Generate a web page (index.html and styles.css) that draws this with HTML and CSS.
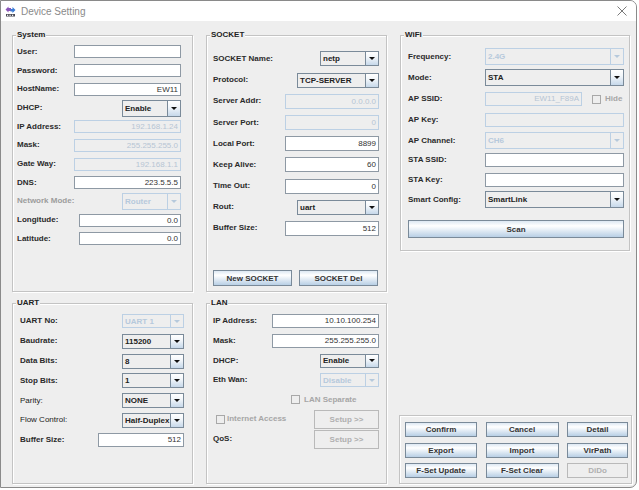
FILE: index.html
```html
<!DOCTYPE html>
<html>
<head>
<meta charset="utf-8">
<title>Device Setting</title>
<link rel="stylesheet" href="styles.css">
</head>
<body>
<div class="window">
  <div class="titlebar">
    <svg class="app-icon" width="11" height="11" viewBox="0 0 11 11">
      <path d="M0.5 3.5 L3.5 0.5 L3.5 2 L6 2 L6 5 L3.5 5 L3.5 6.5 Z" fill="#8a55b8"/>
      <path d="M10.5 4 L7.5 7 L7.5 5.5 L5.5 5.5 L5.5 3 L7.5 3 L7.5 1 Z" fill="#3a7bd5"/>
      <rect x="1" y="8" width="9" height="2.5" fill="#4a4a55"/>
      <rect x="2" y="8.7" width="1.2" height="1.2" fill="#fff"/>
      <rect x="4.5" y="8.7" width="1.2" height="1.2" fill="#fff"/>
      <rect x="7" y="8.7" width="1.2" height="1.2" fill="#fff"/>
    </svg>
    <span class="title">Device Setting</span>
    <svg class="close" width="10" height="10" viewBox="0 0 10 10">
      <path d="M0.5 0.5 L9.5 9.5 M9.5 0.5 L0.5 9.5" stroke="#7a7a7a" stroke-width="1" fill="none"/>
    </svg>
  </div>

  <div class="content">
    <!-- System -->
    <section class="group g-system">
      <span class="legend">System</span>
      <div class="rows sys-rows">
        <div class="row"><span class="lbl">User:</span><span class="tf w107 h13"></span></div>
        <div class="row"><span class="lbl">Password:</span><span class="tf w107 h13"></span></div>
        <div class="row"><span class="lbl">HostName:</span><span class="tf w107 h13">EW11</span></div>
        <div class="row"><span class="lbl">DHCP:</span><span class="cb w59 h17"><span class="cb-text">Enable</span><span class="cb-btn"></span></span></div>
        <div class="row"><span class="lbl">IP Address:</span><span class="tf dis w107 h13">192.168.1.24</span></div>
        <div class="row"><span class="lbl">Mask:</span><span class="tf dis w107 h13">255.255.255.0</span></div>
        <div class="row"><span class="lbl">Gate Way:</span><span class="tf dis w107 h13">192.168.1.1</span></div>
        <div class="row"><span class="lbl">DNS:</span><span class="tf w107 h13">223.5.5.5</span></div>
        <div class="row"><span class="lbl dis-lbl">Network Mode:</span><span class="cb dis w59 h17"><span class="cb-text">Router</span><span class="cb-btn"></span></span></div>
        <div class="row"><span class="lbl">Longitude:</span><span class="tf w102 h13">0.0</span></div>
        <div class="row"><span class="lbl">Latitude:</span><span class="tf w102 h13">0.0</span></div>
      </div>
    </section>

    <!-- SOCKET -->
    <section class="group g-socket">
      <span class="legend">SOCKET</span>
      <div class="rows sock-rows">
        <div class="row"><span class="lbl">SOCKET Name:</span><span class="cb w59 h15"><span class="cb-text">netp</span><span class="cb-btn"></span></span></div>
        <div class="row"><span class="lbl">Protocol:</span><span class="cb w82 h15"><span class="cb-text">TCP-SERVER</span><span class="cb-btn"></span></span></div>
        <div class="row"><span class="lbl">Server Addr:</span><span class="tf dis w94 h15">0.0.0.0</span></div>
        <div class="row"><span class="lbl">Server Port:</span><span class="tf dis w94 h15">0</span></div>
        <div class="row"><span class="lbl">Local Port:</span><span class="tf w94 h15">8899</span></div>
        <div class="row"><span class="lbl">Keep Alive:</span><span class="tf w94 h15">60</span></div>
        <div class="row"><span class="lbl">Time Out:</span><span class="tf w94 h15">0</span></div>
        <div class="row"><span class="lbl">Rout:</span><span class="cb w82 h15"><span class="cb-text">uart</span><span class="cb-btn"></span></span></div>
        <div class="row"><span class="lbl">Buffer Size:</span><span class="tf w94 h15">512</span></div>
      </div>
      <div class="sock-btns">
        <span class="btn">New SOCKET</span>
        <span class="btn">SOCKET Del</span>
      </div>
    </section>

    <!-- WiFi -->
    <section class="group g-wifi">
      <span class="legend">WiFi</span>
      <div class="wifi-grid">
        <span class="lbl">Frequency:</span><span class="cb dis h17"><span class="cb-text">2.4G</span><span class="cb-btn"></span></span>
        <span class="lbl">Mode:</span><span class="cb h17"><span class="cb-text">STA</span><span class="cb-btn"></span></span>
        <span class="lbl">AP SSID:</span>
        <span class="ssid-line"><span class="tf dis w97 h14">EW11_F89A</span><span class="chk"></span><span class="chk-lbl">Hide</span></span>
        <span class="lbl">AP Key:</span><span class="tf dis h14"></span>
        <span class="lbl">AP Channel:</span><span class="cb dis h17"><span class="cb-text">CH6</span><span class="cb-btn"></span></span>
        <span class="lbl">STA SSID:</span><span class="tf h14"></span>
        <span class="lbl">STA Key:</span><span class="tf h14"></span>
        <span class="lbl">Smart Config:</span><span class="cb h17"><span class="cb-text">SmartLink</span><span class="cb-btn"></span></span>
      </div>
      <span class="btn scan">Scan</span>
    </section>

    <!-- UART -->
    <section class="group g-uart">
      <span class="legend">UART</span>
      <div class="rows uart-rows">
        <div class="row"><span class="lbl">UART No:</span><span class="cb dis w62 h14"><span class="cb-text">UART 1</span><span class="cb-btn"></span></span></div>
        <div class="row"><span class="lbl">Baudrate:</span><span class="cb w62 h15"><span class="cb-text">115200</span><span class="cb-btn"></span></span></div>
        <div class="row"><span class="lbl">Data Bits:</span><span class="cb w62 h15"><span class="cb-text">8</span><span class="cb-btn"></span></span></div>
        <div class="row"><span class="lbl">Stop Bits:</span><span class="cb w62 h15"><span class="cb-text">1</span><span class="cb-btn"></span></span></div>
        <div class="row"><span class="lbl reg">Parity:</span><span class="cb w62 h15"><span class="cb-text">NONE</span><span class="cb-btn"></span></span></div>
        <div class="row"><span class="lbl reg">Flow Control:</span><span class="cb w62 h15"><span class="cb-text">Half-Duplex</span><span class="cb-btn"></span></span></div>
        <div class="row"><span class="lbl">Buffer Size:</span><span class="tf w86 h14">512</span></div>
      </div>
    </section>

    <!-- LAN -->
    <section class="group g-lan">
      <span class="legend">LAN</span>
      <div class="rows lan-rows">
        <div class="row"><span class="lbl">IP Address:</span><span class="tf w107 h14">10.10.100.254</span></div>
        <div class="row"><span class="lbl">Mask:</span><span class="tf w107 h14">255.255.255.0</span></div>
        <div class="row"><span class="lbl">DHCP:</span><span class="cb w59 h14"><span class="cb-text">Enable</span><span class="cb-btn"></span></span></div>
        <div class="row"><span class="lbl">Eth Wan:</span><span class="cb dis w59 h14"><span class="cb-text">Disable</span><span class="cb-btn"></span></span></div>
        <div class="row sep-row"><span class="chk"></span><span class="chk-lbl">LAN Separate</span></div>
        <div class="row"><span class="inet"><span class="chk"></span><span class="chk-lbl">Internet Access</span></span><span class="btn dis w65 h19">Setup &gt;&gt;</span></div>
        <div class="row"><span class="lbl">QoS:</span><span class="btn dis w65 h19">Setup &gt;&gt;</span></div>
      </div>
    </section>

    <!-- Buttons -->
    <section class="group g-actions">
      <div class="act-grid">
        <span class="btn">Confirm</span>
        <span class="btn">Cancel</span>
        <span class="btn">Detail</span>
        <span class="btn">Export</span>
        <span class="btn">Import</span>
        <span class="btn">VirPath</span>
        <span class="btn">F-Set Update</span>
        <span class="btn">F-Set Clear</span>
        <span class="btn dis">DiDo</span>
      </div>
    </section>
  </div>
</div>
</body>
</html>
```

FILE: styles.css
```css
* { box-sizing: border-box; }

body {
  margin: 0;
  background: #ffffff;
  font-family: "Liberation Sans", Arial, sans-serif;
}

.window {
  width: 637px;
  height: 488px;
  border: 1px solid #8a8a8a;
  border-radius: 0 7px 7px 0;
  overflow: hidden;
  background: #eeeeee;
  display: flex;
  flex-direction: column;
}

/* ---------- title bar ---------- */
.titlebar {
  flex: none;
  height: 20px;
  background: #ffffff;
  display: flex;
  align-items: center;
  padding-left: 4px;
}
.app-icon { flex: none; margin-top: 1px; }
.title {
  margin-left: 5px;
  font-size: 10px;
  color: #8a8a8a;
}
.close { margin-left: auto; margin-right: 9px; }

/* ---------- main grid ---------- */
.content {
  flex: 1;
  display: grid;
  grid-template-columns: 181px 181px 230px;
  grid-template-rows: 257px 181px;
  column-gap: 13px;
  row-gap: 11px;
  padding: 14px 0 0 11px;
}

.group {
  position: relative;
  border: 1px solid #c3c3c3;
  box-shadow: inset 1px 1px 0 #ffffff, 1px 1px 0 #ffffff;
  display: flex;
  flex-direction: column;
}
.legend {
  position: absolute;
  top: -6px;
  left: 3px;
  padding: 0 1px;
  background: #eeeeee;
  font: bold 8px/10px "Liberation Sans", Arial, sans-serif;
  color: #222222;
}

.g-wifi { align-self: start; height: 216px; }
.g-actions { align-self: end; height: 69px; margin-left: -1px; margin-right: -2px; }

/* ---------- rows ---------- */
.rows { display: grid; }
.row {
  display: flex;
  align-items: center;
  justify-content: space-between;
}
.lbl {
  font: bold 8px/10px "Liberation Sans", Arial, sans-serif;
  color: #2a2a2a;
  white-space: nowrap;
}
.lbl.reg { font-weight: normal; color: #1a1a1a; }
.dis-lbl { color: #9c9c9c; }

.sys-rows { grid-auto-rows: 18.7px; padding: 6.6px 11px 0 4px; }
.sock-rows { grid-auto-rows: 21.2px; padding: 12.4px 7px 0 6px; }
.uart-rows { grid-auto-rows: 19.8px; padding: 7.6px 8px 0 7px; }
.lan-rows { grid-auto-rows: 19.6px; padding: 7.7px 7px 0 6px; }

/* ---------- text fields ---------- */
.tf {
  display: block;
  background: #ffffff;
  border: 1px solid #8e99a4;
  font: 8px/11px "Liberation Sans", Arial, sans-serif;
  color: #333333;
  text-align: right;
  padding: 0 2px;
  white-space: nowrap;
  overflow: hidden;
}
.tf.dis {
  background: #eeeeee;
  border-color: #bcd0e4;
  color: #b6c5d4;
}

.w59 { width: 59px; }
.w62 { width: 62px; }
.w65 { width: 65px; }
.w82 { width: 82px; }
.w86 { width: 86px; }
.w94 { width: 94px; }
.w97 { width: 97px; }
.w102 { width: 102px; }
.w107 { width: 107px; }
.h13 { height: 13px; line-height: 11px; }
.h14 { height: 14px; line-height: 12px; }
.h15 { height: 15px; line-height: 13px; }
.h17 { height: 17px; line-height: 15px; }
.h19 { height: 19px; }

/* ---------- combo boxes ---------- */
.cb {
  display: flex;
  border: 1px solid #7a8a99;
  background: #eeeeee;
}
.cb-text {
  flex: 1;
  padding-left: 2px;
  font: bold 8px "Liberation Sans", Arial, sans-serif;
  color: #222222;
  display: flex;
  align-items: center;
  white-space: nowrap;
  overflow: hidden;
}
.cb-btn {
  flex: none;
  width: 13px;
  border-left: 1px solid #7a8a99;
  background: linear-gradient(#ffffff, #f2f6fa 40%, #c6d8ea);
  display: flex;
  align-items: center;
  justify-content: center;
}
.cb-btn::after {
  content: "";
  border-left: 3px solid transparent;
  border-right: 3px solid transparent;
  border-top: 3px solid #111111;
}
.cb.dis { border-color: #bcd0e4; }
.cb.dis .cb-text { color: #b6c9dc; }
.cb.dis .cb-btn { border-left-color: #bcd0e4; background: #eeeeee; }
.cb.dis .cb-btn::after { border-top-color: #b6c9dc; }

/* ---------- buttons ---------- */
.btn {
  display: flex;
  align-items: center;
  justify-content: center;
  border: 1px solid #7a8a99;
  background: linear-gradient(#dde8f3 0%, #ffffff 30%, #f6f9fc 40%, #b8cfe5 100%);
  font: bold 8px "Liberation Sans", Arial, sans-serif;
  color: #333333;
  white-space: nowrap;
}
.btn.dis {
  background: #eeeeee;
  border-color: #b9b9b9;
  color: #b0b0b0;
}

.sock-btns {
  margin-top: auto;
  display: flex;
  gap: 7px;
  padding: 0 7px 5px 6px;
}
.sock-btns .btn { width: 79px; height: 16px; }

/* ---------- wifi ---------- */
.wifi-grid {
  display: grid;
  grid-template-columns: 77px 1fr;
  grid-template-rows: 21px 21.5px 21.25px 21px 20.25px 18.75px 19.5px 20.75px;
  align-items: center;
  padding: 10px 5px 0 7px;
}
.ssid-line { display: flex; align-items: center; }
.ssid-line .chk { margin-left: 10px; }
.scan { height: 18px; margin: 10px 5px 0 7px; }

/* ---------- checkboxes ---------- */
.chk {
  flex: none;
  width: 9px;
  height: 9px;
  border: 1px solid #a8a8a8;
  background: #eeeeee;
}
.chk-lbl {
  margin-left: 4px;
  font: bold 8px/10px "Liberation Sans", Arial, sans-serif;
  color: #a6a6a6;
  white-space: nowrap;
}
.sep-row { justify-content: flex-start; padding-left: 78px; }
.inet { display: flex; align-items: center; padding-left: 3px; }
.inet .chk-lbl { margin-left: 2px; }

/* ---------- action buttons ---------- */
.act-grid {
  display: grid;
  grid-template-columns: 72px 73px 61px;
  grid-auto-rows: 15px;
  column-gap: 8.5px;
  row-gap: 5.5px;
  padding: 6px 0 0 5px;
}
```
